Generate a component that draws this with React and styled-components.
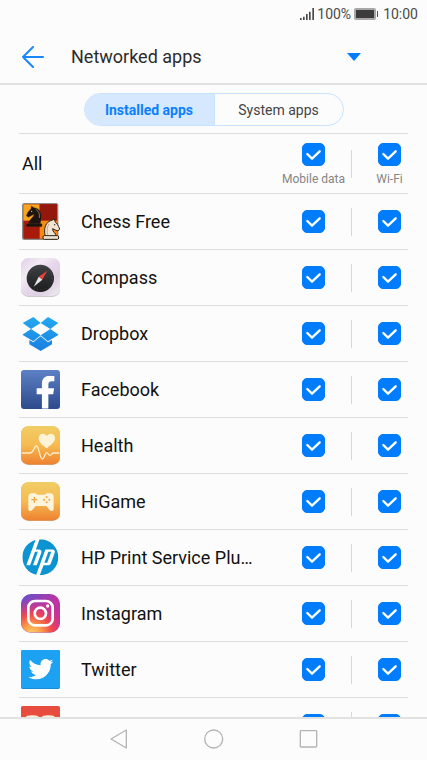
import { useState } from 'react';
import styled, { createGlobalStyle } from 'styled-components';
import { FaFacebookF, FaTwitter } from 'react-icons/fa';
import { SiHp } from 'react-icons/si';

const GlobalStyle = createGlobalStyle`
  *, *::before, *::after {
    box-sizing: border-box;
  }

  body {
    margin: 0;
    background: #fcfcfc;
    color: #111;
    font-family: Roboto, "Noto Sans", sans-serif;
  }

  button {
    padding: 0;
    border: 0;
    background: none;
    font: inherit;
    cursor: pointer;
  }
`;

const ChessIcon = () => (
    <AppIcon viewBox="0 0 117 117">
        <rect x="3" y="3" width="109" height="111" rx="7" fill="#8d8a86" />
        <rect x="7" y="7" width="101" height="103" rx="3" fill="#a81a0b" />
        <path d="M7 7h49v49H7z" fill="#fba41c" />
        <path d="M56 7h52v49H56z" fill="#94170c" />
        <path d="M56 56h52v54H56z" fill="#f58a14" />
        <g fill="#1c1410" stroke="#5a3a20" strokeWidth="1">
            <path d="M22 66C24 52 38 47 39 37l-8 4-9 5-6-5 5-11 9-10 1-8 8 5c14 1 22 12 22 26 0 9-2 17-3 23z" />
            <rect x="16" y="65" width="47" height="9" rx="3" />
        </g>
        <path d="M44 22c9 5 13 14 11 26" fill="none" stroke="#c9a176" strokeWidth="2" />
        <circle cx="32" cy="28" r="2" fill="#e8d3b0" />
        <g fill="#efe4d2" stroke="#33251a" strokeWidth="3">
            <path d="M73 103c-6-22 0-45 22-49l5-4 2 9c6 4 10 12 14 22l-5 6-8-3-8-4c-2 10 10 12 11 23z" />
            <rect x="66" y="101" width="47" height="11" rx="4" />
        </g>
        <path d="M84 66c-6 9-7 20-4 32" fill="none" stroke="#a58c70" strokeWidth="2" />
        <circle cx="101" cy="68" r="2" fill="#33251a" />
    </AppIcon>
);

const CompassIcon = () => (
    <AppIcon viewBox="0 0 117 117">
        <defs>
            <linearGradient id="compassBg" x1="0" y1="0" x2="1" y2="1">
                <stop offset="0" stopColor="#e0cfe6" />
                <stop offset="0.3" stopColor="#f3ebf4" />
                <stop offset="0.5" stopColor="#e6d7ea" />
                <stop offset="0.7" stopColor="#ded0e2" />
                <stop offset="1" stopColor="#efecf0" />
            </linearGradient>
            <linearGradient id="compassDial" x1="0" y1="0" x2="0" y2="1">
                <stop offset="0" stopColor="#3f4042" />
                <stop offset="1" stopColor="#1b1c1e" />
            </linearGradient>
        </defs>
        <rect x="0" y="2" width="117" height="115" rx="22" fill="#cfc8cf" />
        <rect x="0" y="0" width="117" height="114" rx="22" fill="url(#compassBg)" />
        <circle cx="58" cy="61" r="41" fill="url(#compassDial)" />
        <circle cx="58" cy="61" r="35" fill="none" stroke="#5a5c5e" strokeWidth="3" strokeDasharray="2 7" />
        <path d="M79 38L64 65 53 56z" fill="#e5423c" />
        <path d="M53 56l11 9-26 21z" fill="#e6e6e6" />
    </AppIcon>
);

const DropboxIcon = () => (
    <AppIcon viewBox="0 0 117 117">
        <defs>
            <linearGradient id="dropboxBg" gradientUnits="userSpaceOnUse" x1="0" y1="10" x2="0" y2="110">
                <stop offset="0" stopColor="#22a9ef" />
                <stop offset="1" stopColor="#1b7fe2" />
            </linearGradient>
        </defs>
        <g fill="url(#dropboxBg)">
            <path d="M37 9l22 18-29 18L5 27z" />
            <path d="M81 9l31 18-24 18-29-18z" />
            <path d="M30 45l29 19-22 18L4 62z" />
            <path d="M88 45l25 17-32 20-22-18z" />
            <path d="M25 78l12 7 22-18 22 18 12-7v13l-34 20-34-20z" />
        </g>
    </AppIcon>
);

const FacebookIcon = () => (
    <AppIcon viewBox="0 0 117 117">
        <defs>
            <linearGradient id="facebookBg" x1="0" y1="0" x2="0" y2="1">
                <stop offset="0" stopColor="#5c80c6" />
                <stop offset="1" stopColor="#2d4a8b" />
            </linearGradient>
        </defs>
        <rect width="117" height="117" rx="9" fill="url(#facebookBg)" />
        <FaFacebookF x="24" y="17" size="99" color="#fff" />
    </AppIcon>
);

const WarmBackground = ({ id }) => (
    <>
        <defs>
            <linearGradient id={id} x1="0" y1="0" x2="0" y2="1">
                <stop offset="0" stopColor="#f0cd66" />
                <stop offset="0.5" stopColor="#f6bb52" />
                <stop offset="1" stopColor="#ee8230" />
            </linearGradient>
        </defs>
        <rect y="2" width="117" height="115" rx="22" fill="#d9a070" />
        <rect width="117" height="115" rx="22" fill={`url(#${id})`} />
    </>
);

const HealthIcon = () => (
    <AppIcon viewBox="0 0 117 117">
        <WarmBackground id="healthBg" />
        <path
            d="M77 67C64 57 53 49 53 37c0-8 6-14 12-14 6 0 10 3 12 7 3-4 7-7 13-7 7 0 12 6 12 14 0 12-12 20-25 30z"
            fill="#fdf4d8"
        />
        <path
            d="M2 81h26c10 0 11-21 18-21 9 0 10 39 18 39 7 0 7-19 13-19 5 0 5 8 10 8s5-7 10-7h18"
            fill="none"
            stroke="#fdeecb"
            strokeWidth="4"
        />
    </AppIcon>
);

const GameIcon = () => (
    <AppIcon viewBox="0 0 117 117">
        <WarmBackground id="gameBg" />
        <path
            d="M32 34h12l4 4h24l4-4h12c7 0 10 6 10 12v34c0 8-8 9-12 4L76 72H44L34 84c-4 5-12 4-12-4V46c0-6 3-12 10-12z"
            fill="#fdf4dc"
        />
        <path d="M40 44v18M31 53h18" stroke="#f0a848" strokeWidth="4" />
        <g fill="#f0a848">
            <circle cx="77" cy="45" r="3" />
            <circle cx="77" cy="61" r="3" />
            <circle cx="69" cy="53" r="3" />
            <circle cx="85" cy="53" r="3" />
        </g>
    </AppIcon>
);

const HpIcon = () => (
    <AppIcon viewBox="0 0 117 117">
        <circle cx="58" cy="58" r="52" fill="#fff" />
        <SiHp x="4" y="4" size="108" color="#0b93d2" />
    </AppIcon>
);

const InstagramIcon = () => (
    <AppIcon viewBox="0 0 117 117">
        <defs>
            <linearGradient id="instagramBase" x1="0" y1="0" x2="1" y2="1">
                <stop offset="0" stopColor="#5a55d0" />
                <stop offset="0.5" stopColor="#b935a4" />
                <stop offset="1" stopColor="#c8308c" />
            </linearGradient>
            <radialGradient id="instagramGlow" cx="0.28" cy="1.05" r="0.95">
                <stop offset="0" stopColor="#fed472" />
                <stop offset="0.25" stopColor="#fba04a" />
                <stop offset="0.55" stopColor="#f0484e" />
                <stop offset="1" stopColor="#d0309a" stopOpacity="0" />
            </radialGradient>
        </defs>
        <rect y="2" width="117" height="115" rx="30" fill="#c9a8b0" />
        <rect width="117" height="115" rx="30" fill="url(#instagramBase)" />
        <rect width="117" height="115" rx="30" fill="url(#instagramGlow)" />
        <rect x="22" y="21" width="73" height="73" rx="20" fill="none" stroke="#fff" strokeWidth="8" />
        <circle cx="58" cy="58" r="17" fill="none" stroke="#fff" strokeWidth="8" />
        <circle cx="80" cy="36" r="5" fill="#fff" />
    </AppIcon>
);

const TwitterIcon = () => (
    <AppIcon viewBox="0 0 117 117">
        <rect width="117" height="117" rx="5" fill="#1b86ca" />
        <rect width="117" height="115" rx="5" fill="#1da1f2" />
        <FaTwitter x="22" y="20" size="75" color="#fff" />
    </AppIcon>
);

const RedIcon = () => (
    <AppIcon viewBox="0 0 117 117">
        <rect width="117" height="117" rx="5" fill="#e74c3f" />
        <path d="M16 30q18-4 36 0v60H16zM64 30q18-4 36 0v60H64z" fill="#fdf1dc" />
    </AppIcon>
);

const apps = [
    { id: 'chess', name: 'Chess Free', Icon: ChessIcon },
    { id: 'compass', name: 'Compass', Icon: CompassIcon },
    { id: 'dropbox', name: 'Dropbox', Icon: DropboxIcon },
    { id: 'facebook', name: 'Facebook', Icon: FacebookIcon },
    { id: 'health', name: 'Health', Icon: HealthIcon },
    { id: 'higame', name: 'HiGame', Icon: GameIcon },
    { id: 'hp', name: 'HP Print Service Plugin', Icon: HpIcon },
    { id: 'instagram', name: 'Instagram', Icon: InstagramIcon },
    { id: 'twitter', name: 'Twitter', Icon: TwitterIcon },
    { id: 'red', name: '', Icon: RedIcon },
];

const allOn = () => Object.fromEntries(apps.map(({ id }) => [id, true]));

const CheckBox = (props) => (
    <CheckWrap>
        <CheckInput type="checkbox" {...props} />
        <CheckMark viewBox="0 0 69 69" aria-hidden="true">
            <path d="M16 33l14 14 23-22" />
        </CheckMark>
    </CheckWrap>
);

const StatusBar = () => (
    <Status>
        <svg width="14" height="12" viewBox="0 0 42 36" fill="#4a4a4a" aria-hidden="true">
            <path d="M0 30h5v6H0zM9 26h5v10H9zM18 18h5v18h-5zM27 11h5v25h-5zM37 0h5v36h-5z" />
        </svg>
        <span>100%</span>
        <Battery width="24" height="12" viewBox="0 0 24 12" aria-hidden="true">
            <rect width="22" height="12" rx="2" fill="#a8a8a8" />
            <rect x="2" y="2" width="18" height="8" fill="#3c3c3c" />
            <path d="M23 3h1v6h-1z" fill="#555" />
        </Battery>
        <span>10:00</span>
    </Status>
);

const App = () => {
    const [tab, setTab] = useState('installed');
    const [mobile, setMobile] = useState(allOn);
    const [wifi, setWifi] = useState(allOn);

    const toggle = (setter, id) => setter((prev) => ({ ...prev, [id]: !prev[id] }));
    const toggleAll = (setter, on) => setter(Object.fromEntries(apps.map(({ id }) => [id, on])));
    const every = (values) => apps.every(({ id }) => values[id]);

    return (
        <Screen>
            <GlobalStyle />
            <StatusBar />
            <Header>
                <BackButton type="button" aria-label="Back">
                    <svg width="22" height="22" viewBox="0 0 22 22">
                        <path d="M11 1L1 11l10 10M1 11h20" />
                    </svg>
                </BackButton>
                <h1>Networked apps</h1>
                <MenuButton type="button" aria-label="Choose list">
                    <svg width="14" height="8" viewBox="0 0 14 8">
                        <path d="M0 0h14L7 8z" fill="#007dff" />
                    </svg>
                </MenuButton>
            </Header>
            <Tabs role="tablist">
                <Tab
                    type="button"
                    role="tab"
                    aria-selected={tab === 'installed'}
                    $active={tab === 'installed'}
                    onClick={() => setTab('installed')}
                >
                    Installed apps
                </Tab>
                <Tab
                    type="button"
                    role="tab"
                    aria-selected={tab === 'system'}
                    $active={tab === 'system'}
                    onClick={() => setTab('system')}
                >
                    System apps
                </Tab>
            </Tabs>
            <ListArea>
                <Table>
                    <colgroup>
                        <col width="62" />
                        <col />
                        <col width="75" />
                        <col width="57" />
                    </colgroup>
                    <thead>
                        <HeadRow>
                            <AllCell colSpan="2" scope="col">All</AllCell>
                            <th scope="col">
                                <HeadCheck>
                                    <CheckBox
                                        checked={every(mobile)}
                                        onChange={(e) => toggleAll(setMobile, e.target.checked)}
                                    />
                                    Mobile data
                                </HeadCheck>
                            </th>
                            <th scope="col">
                                <WifiCell>
                                    <HeadCheck>
                                        <CheckBox
                                            checked={every(wifi)}
                                            onChange={(e) => toggleAll(setWifi, e.target.checked)}
                                        />
                                        Wi-Fi
                                    </HeadCheck>
                                </WifiCell>
                            </th>
                        </HeadRow>
                    </thead>
                    <tbody>
                        {apps.map(({ id, name, Icon }) => (
                            <Row key={id}>
                                <IconCell><Icon /></IconCell>
                                <NameCell scope="row">{name}</NameCell>
                                <td>
                                    <CheckBox
                                        aria-label={`${name} mobile data`}
                                        checked={mobile[id]}
                                        onChange={() => toggle(setMobile, id)}
                                    />
                                </td>
                                <td>
                                    <WifiCell>
                                        <CheckBox
                                            aria-label={`${name} Wi-Fi`}
                                            checked={wifi[id]}
                                            onChange={() => toggle(setWifi, id)}
                                        />
                                    </WifiCell>
                                </td>
                            </Row>
                        ))}
                    </tbody>
                </Table>
            </ListArea>
            <NavBar>
                <NavButton type="button" aria-label="Go back">
                    <svg width="20" height="20" viewBox="0 0 60 60">
                        <path d="M6 30L52 3v54z" />
                    </svg>
                </NavButton>
                <NavButton type="button" aria-label="Home">
                    <svg width="20" height="20" viewBox="0 0 60 60">
                        <circle cx="29" cy="30" r="27" />
                    </svg>
                </NavButton>
                <NavButton type="button" aria-label="Recent apps">
                    <svg width="20" height="20" viewBox="0 0 60 60">
                        <rect x="4" y="5" width="49" height="49" rx="2" />
                    </svg>
                </NavButton>
            </NavBar>
        </Screen>
    );
};

const Screen = styled.main`
  display: flex;
  flex-direction: column;
  height: 100vh;
`;

const Status = styled.div`
  display: flex;
  flex: none;
  align-items: center;
  justify-content: flex-end;
  gap: 3px;
  height: 30px;
  padding: 0 9px 2px 0;
  color: #4a4a4a;
  font-size: 14px;
  line-height: 20px;
`;

const Battery = styled.svg`
  margin-right: 2px;
`;

const Header = styled.header`
  display: flex;
  flex: none;
  align-items: center;
  height: 55px;
  padding: 0 66px 0 22px;
  border-bottom: 2px solid #e0e0e0;

  h1 {
    flex: 1;
    margin: 0 0 0 27px;
    color: #2b2b2b;
    font-size: 18px;
    font-weight: 400;
    line-height: 24px;
  }
`;

const BackButton = styled.button`
  display: flex;

  path {
    fill: none;
    stroke: #1a88fc;
    stroke-width: 2;
    stroke-linecap: round;
    stroke-linejoin: round;
  }
`;

const MenuButton = styled.button`
  display: flex;
`;

const Tabs = styled.div`
  display: flex;
  flex: none;
  align-self: center;
  margin: 8px 0 7px;
  border: 1px solid #c8e2ff;
  border-radius: 17px;
  overflow: hidden;
`;

const Tab = styled.button`
  width: 129px;
  height: 31px;
  background: ${({ $active }) => ($active ? '#d6e8fd' : 'transparent')};
  color: ${({ $active }) => ($active ? '#0a80ff' : '#444')};
  font-size: 14px;
  font-weight: ${({ $active }) => ($active ? 700 : 400)};
  line-height: 20px;

  & + & {
    border-left: 1px solid #c8e2ff;
  }
`;

const ListArea = styled.div`
  flex: 1;
  min-height: 0;
  padding: 0 19px;
  overflow-y: auto;
  scrollbar-width: none;
`;

const Table = styled.table`
  width: 100%;
  table-layout: fixed;
  border-spacing: 0;
  border-top: 1px solid #dcdcdc;

  th,
  td {
    padding: 0;
    border-bottom: 1px solid #dcdcdc;
    font-weight: 400;
  }
`;

const HeadRow = styled.tr`
  height: 60px;
`;

const Row = styled.tr`
  height: 56px;
`;

const AllCell = styled.th`
  && {
    padding-left: 3px;
  }
  font-size: 18px;
  line-height: 24px;
  text-align: left;
`;

const IconCell = styled.td`
  && {
    padding-left: 2px;
  }
`;

const NameCell = styled.th`
  && {
    padding-right: 20px;
  }
  overflow: hidden;
  font-size: 18px;
  line-height: 24px;
  text-align: left;
  text-overflow: ellipsis;
  white-space: nowrap;
`;

const AppIcon = styled.svg`
  display: block;
  width: 39px;
  height: 39px;
  overflow: visible;
`;

const HeadCheck = styled.label`
  display: flex;
  flex-direction: column;
  align-items: center;
  gap: 5px;
  padding-top: 2px;
  color: #858585;
  font-size: 12px;
  line-height: 16px;
  white-space: nowrap;
`;

const WifiCell = styled.div`
  display: flex;
  align-items: center;

  &::before {
    content: '';
    width: 1px;
    height: 28px;
    margin-right: 19px;
    background: #d8d8d8;
  }

  > * {
    flex: 1;
  }
`;

const CheckWrap = styled.span`
  display: grid;
  place-items: center;
`;

const CheckInput = styled.input`
  grid-area: 1 / 1;
  width: 23px;
  height: 23px;
  margin: 0;
  appearance: none;
  border: 1px solid #b5b5b5;
  border-radius: 5px;
  cursor: pointer;

  &:checked {
    border-color: #007dff;
    background: #007dff;
  }
`;

const CheckMark = styled.svg`
  grid-area: 1 / 1;
  width: 23px;
  height: 23px;
  fill: none;
  stroke: #fff;
  stroke-width: 7;
  stroke-linecap: round;
  stroke-linejoin: round;
  pointer-events: none;
`;

const NavBar = styled.nav`
  display: flex;
  flex: none;
  justify-content: center;
  height: 43px;
  padding-bottom: 2px;
  border-top: 2px solid #e2e2e2;
`;

const NavButton = styled.button`
  display: flex;
  align-items: center;
  justify-content: center;
  width: 95px;

  svg {
    fill: none;
    stroke: #b4b4b4;
    stroke-width: 4;
    stroke-linejoin: round;
  }
`;

export default App;
